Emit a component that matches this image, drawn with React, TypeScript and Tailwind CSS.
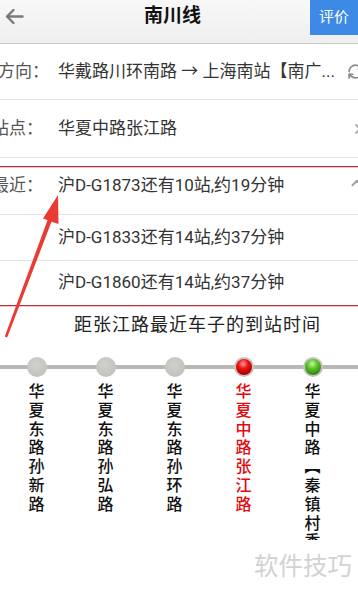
import React from "react";
import { RefreshCw, X, ChevronUp } from "lucide-react";

const FONT = { fontFamily: 'Roboto, "Noto Sans CJK SC", sans-serif' };

type Station = { name: string[]; kind: "gray" | "red" | "green" };

const stations: Station[] = [
  { name: ["华", "夏", "东", "路", "孙", "新", "路"], kind: "gray" },
  { name: ["华", "夏", "东", "路", "孙", "弘", "路"], kind: "gray" },
  { name: ["华", "夏", "东", "路", "孙", "环", "路"], kind: "gray" },
  { name: ["华", "夏", "中", "路", "张", "江", "路"], kind: "red" },
  { name: ["华", "夏", "中", "路", "︻", "秦", "镇", "村", "委"], kind: "green" },
];

function Dot({ kind }: { kind: Station["kind"] }) {
  if (kind === "gray")
    return <div className="w-[20px] h-[20px] rounded-full bg-[radial-gradient(circle_at_45%_40%,#d2d0cc,#c4c2be_70%,#b9b7b3_100%)]" />;
  if (kind === "red")
    return (
      <div className="w-[20px] h-[20px] rounded-full bg-[#c7c3be] p-[2px]">
        <div className="w-full h-full rounded-full bg-[radial-gradient(circle_at_45%_30%,#ff9a9a_0%,#e11_35%,#a00_75%,#700_100%)]" />
      </div>
    );
  return (
    <div className="w-[20px] h-[20px] rounded-full bg-[#c7c3be] p-[2px]">
      <div className="w-full h-full rounded-full bg-[radial-gradient(circle_at_45%_30%,#c8f5a0_0%,#5bc42a_35%,#2e8a12_75%,#1d5e0a_100%)]" />
    </div>
  );
}

export default function App() {
  return (
    <div className="relative w-[358px] h-[594px] overflow-hidden bg-white" style={FONT}>
      {/* Header */}
      <div className="h-[44px] border-b border-[#c9c9c9] bg-[linear-gradient(#f8f8f8,#efefef)] flex items-start relative">
        <div className="pl-[5px] pt-[8px] w-[60px]">
          <svg width="19" height="17" viewBox="0 0 19 17" fill="none" stroke="#7a7a7a" strokeWidth="2.4" strokeLinecap="round" strokeLinejoin="round">
            <path d="M17.5 8.5H2M8.5 2L2 8.5L8.5 15" />
          </svg>
        </div>
        <div className="flex-1 text-center text-[19px] font-bold text-[#111] leading-[32px] pr-[25px]">南川线</div>
        <div className="w-[48px] h-[35px] bg-[#3d8ae6] text-white text-[15px] flex items-center justify-center leading-none">评价</div>
      </div>

      {/* Row 1 */}
      <div className="h-[56px] border-b border-[#e3e3e3] flex items-center text-[17px] whitespace-nowrap">
        <div className="w-[60px] shrink-0 ml-[-2px] text-[#555]">方向：</div>
        <div className="text-[#333] flex-1">华戴路川环南路 → 上海南站【南广...</div>
        <RefreshCw size={17} color="#8a8a8a" strokeWidth={2.4} className="shrink-0 mr-[-6px]" />
      </div>

      {/* Row 2 */}
      <div className="h-[58px] border-b border-[#e3e3e3] flex items-center text-[17px] whitespace-nowrap">
        <div className="w-[66px] shrink-0 ml-[-8px] text-[#555]">站点：</div>
        <div className="text-[#333] flex-1">华夏中路张江路</div>
        <X size={16} color="#a0a0a0" strokeWidth={2.6} className="shrink-0 mr-[-10px]" />
      </div>

      {/* Row 3 */}
      <div className="h-[57px] border-b border-[#e3e3e3] flex items-center text-[17px] whitespace-nowrap">
        <div className="w-[66px] shrink-0 ml-[-8px] text-[#555]">最近：</div>
        <div className="text-[#333] flex-1">沪D-G1873还有10站,约19分钟</div>
        <ChevronUp size={18} color="#a0a0a0" strokeWidth={2.6} className="shrink-0 mr-[-8px] mt-[-6px]" />
      </div>

      {/* Row 4 */}
      <div className="h-[46px] border-b border-[#e3e3e3] flex items-center text-[17px] whitespace-nowrap pl-[58px] text-[#333]">
        沪D-G1833还有14站,约37分钟
      </div>

      {/* Row 5 */}
      <div className="h-[45px] border-b border-[#e3e3e3] flex items-center text-[17px] whitespace-nowrap pl-[58px] text-[#333]">
        沪D-G1860还有14站,约37分钟
      </div>

      {/* Caption */}
      <div className="h-[37px] flex items-center pl-[74px] text-[18px] tracking-[1px] text-[#222] whitespace-nowrap">
        距张江路最近车子的到站时间
      </div>

      {/* Stations */}
      <div className="relative">
        <div className="absolute left-0 right-0 top-[22px] h-[4px] bg-[#bab8b4]" />
        <div className="relative flex pl-[2px]">
          {stations.map((s, i) => (
            <div key={i} className="w-[69px] shrink-0 flex flex-col items-center">
              <div className="mt-[14px]">
                <Dot kind={s.kind} />
              </div>
              <div
                className={
                  "mt-[6px] h-[157px] overflow-hidden flex flex-col items-center text-[16px] font-medium leading-[18.8px] " +
                  (s.kind === "red" ? "text-[#e3090f]" : "text-[#111]")
                }
              >
                {s.name.map((c, j) => (
                  <span key={j} className="block h-[18.8px]">{c}</span>
                ))}
              </div>
            </div>
          ))}
        </div>
      </div>

      {/* Annotation box lines */}
      <div className="absolute left-0 right-0 top-[166px] h-[1px] bg-[#b3343c] shadow-[0_1px_0_#efc4c4]" />
      <div className="absolute left-0 right-0 top-[305px] h-[1px] bg-[#b3343c] shadow-[0_1px_0_#efc4c4]" />

      {/* Annotation arrow */}
      <svg className="absolute left-0 top-0" width="358" height="594" viewBox="0 0 358 594">
        <polygon
          points="58,195 58.5,224 51.5,221.8 7.2,337.5 4.8,336.5 47.5,220.2 43,218.5"
          fill="#ea3a34"
        />
      </svg>

      {/* Watermark */}
      <div className="absolute left-[254px] top-[551px] text-[24.5px] leading-[32px] text-[#d2d2d2] whitespace-nowrap">
        软件技巧
      </div>
    </div>
  );
}
